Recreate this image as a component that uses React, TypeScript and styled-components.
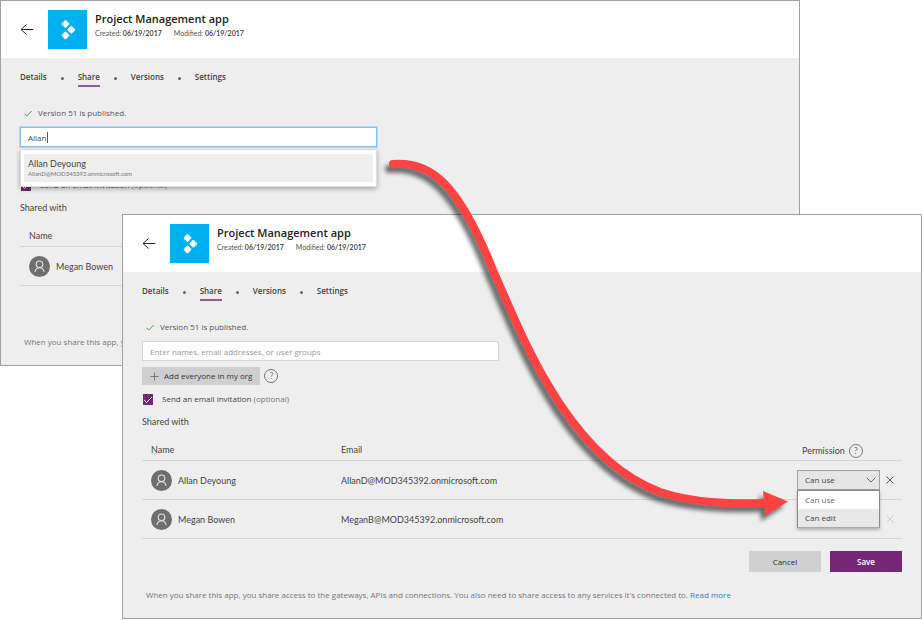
import React from "react";
import styled, { createGlobalStyle, css } from "styled-components";

const compactFont = `Lato, "Open Sans", sans-serif`;

const GlobalStyle = createGlobalStyle`
  *, *::before, *::after { box-sizing: border-box; }
  body {
    margin: 0;
    background: #fff;
    color: #444;
    font-family: "Open Sans", "Noto Sans", sans-serif;
    font-size: 8px;
    line-height: 12px;
  }
  button, input, select { font: inherit; color: inherit; margin: 0; }
  button { padding: 0; border: 0; background: none; }
`;

/* Both windows share one grid cell, so the second one overlaps the first. */
const Desktop = styled.main`
  position: relative;
  display: grid;
  grid-template-areas: "stack";
  align-items: start;
`;

const Window = styled.section<{ $front?: boolean }>`
  grid-area: stack;
  min-width: 0;
  border: 1px solid #a0a0a0;
  background: #eee;
  margin: ${(p) => (p.$front ? "214px 0 0 122px" : "0 122px 0 0")};
`;

const Header = styled.header`
  display: flex;
  align-items: center;
  height: 57px;
  padding: 0 19px;
  background: #fff;
`;

const BackButton = styled.button`
  display: flex;
  width: 28px;
  color: #222;
`;

const TitleBlock = styled.div`
  margin-left: 8px;
  padding-bottom: 10px;
`;

const Title = styled.h1`
  margin: 0;
  font-size: 11px;
  line-height: 16px;
  font-weight: 600;
  color: #222;
`;

const Meta = styled.p`
  display: flex;
  gap: 12px;
  margin: 0;
  font-family: ${compactFont};
  font-size: 7px;
  line-height: 12px;
  color: #555;
  b { font-weight: 600; color: #333; }
`;

const Content = styled.div`
  padding: 13px 19px 17px;
`;

const Tabs = styled.nav`
  display: flex;
  align-items: center;
  gap: 14px;
`;

const Tab = styled.a<{ $active?: boolean }>`
  padding-bottom: 2px;
  border-bottom: 2px solid ${(p) => (p.$active ? "#915a95" : "transparent")};
  font-weight: 600;
  color: #444;
  text-decoration: none;
`;

const Dot = styled.span`
  width: 3px;
  height: 3px;
  margin-bottom: 2px;
  border-radius: 50%;
  background: #666;
`;

const Status = styled.p`
  display: flex;
  align-items: center;
  gap: 6px;
  margin: 20px 0 8px;
  padding-left: 4px;
  color: #555;
`;

const PeopleField = styled.div`
  position: relative;
  width: 47%;
`;

const PeopleInput = styled.input<{ $focused?: boolean }>`
  display: block;
  width: 100%;
  height: 20px;
  padding: 0 7px;
  border: 1px solid #d6d6d6;
  border-radius: 0;
  background: #fff;
  outline: none;
  caret-color: transparent;
  &::placeholder { color: #999; opacity: 1; }
  ${(p) => p.$focused && css`
    border-color: #8cc1ea;
    box-shadow: 0 0 0 1px #b4d7f2;
  `}
`;

const Caret = styled.span`
  position: absolute;
  top: 5px;
  left: 27px;
  width: 1px;
  height: 11px;
  background: #555;
`;

const Suggestions = styled.ul`
  position: absolute;
  top: 100%;
  left: 0;
  right: 0;
  z-index: 1;
  margin: 2px 0 0;
  padding: 4px 3px;
  list-style: none;
  border: 1px solid #ddd;
  border-radius: 1px;
  background: #fff;
  box-shadow: 0 2px 5px rgba(0, 0, 0, 0.3);
`;

const Suggestion = styled.li`
  padding: 4px;
  background: #eee;
  font-family: ${compactFont};
  font-size: 9px;
  line-height: 12px;
  small {
    display: block;
    font-size: 6px;
    line-height: 8px;
    color: #777;
  }
`;

const OrgRow = styled.div<{ $covered?: boolean }>`
  display: flex;
  align-items: center;
  gap: 4px;
  margin-top: 6px;
  visibility: ${(p) => (p.$covered ? "hidden" : "visible")};
`;

const AddButton = styled.button`
  display: flex;
  align-items: center;
  gap: 5px;
  height: 18px;
  padding: 0 8px;
  background: #cfcfcf;
  color: #333;
`;

const HelpButton = styled.button`
  display: flex;
  align-items: center;
  justify-content: center;
  flex: none;
  width: 14px;
  height: 14px;
  border: 1px solid #777;
  border-radius: 50%;
  font-size: 9px;
  line-height: 12px;
  color: #777;
`;

const InviteLabel = styled.label`
  display: flex;
  align-items: center;
  gap: 9px;
  margin-top: 8px;
  padding-left: 1px;
  span span { color: #777; }
`;

const CheckWrap = styled.span`
  display: grid;
  svg, input { grid-area: 1 / 1; }
  svg { pointer-events: none; }
`;

const Checkbox = styled.input`
  appearance: none;
  width: 10px;
  height: 11px;
  background: #742774;
`;

const Heading = styled.h2`
  margin: 11px 0 0;
  font-family: ${compactFont};
  font-size: 9px;
  line-height: 12px;
  font-weight: 400;
`;

const Table = styled.table`
  width: 100%;
  margin-top: 16px;
  table-layout: fixed;
  border-collapse: separate;
  border-spacing: 0;
  font-family: ${compactFont};
  font-size: 9px;
  th, td {
    padding: 0;
    border-bottom: 1px solid #d4d4d4;
    text-align: left;
    font-weight: 400;
  }
  th { height: 17px; vertical-align: top; }
  td { height: 39px; padding-top: 1px; }
`;

const NameTh = styled.th`
  width: 199px;
  && { padding-left: 9px; }
`;

const EmailTh = styled.th<{ $covered?: boolean }>`
  span { visibility: ${(p) => (p.$covered ? "hidden" : "visible")}; }
`;

const PermissionTh = styled.th`
  width: 105px;
  && { padding-left: 5px; }
`;

const Person = styled.div`
  display: flex;
  align-items: center;
  gap: 6px;
  padding-left: 9px;
`;

const Inline = styled.div`
  display: flex;
  align-items: center;
  gap: 4px;
`;

const PermissionTools = styled.div`
  display: flex;
  align-items: center;
  justify-content: flex-end;
  gap: 5px;
  padding: 0 7px 2px 0;
`;

const SelectBox = styled.div`
  position: relative;
  display: grid;
  width: 83px;
  align-items: center;
  font-family: "Open Sans", sans-serif;
  font-size: 8px;
  select, > svg { grid-area: 1 / 1; }
  > svg {
    justify-self: end;
    margin-right: 4px;
    pointer-events: none;
  }
`;

const Select = styled.select`
  appearance: none;
  width: 100%;
  height: 20px;
  padding: 0 7px;
  border: 1px solid #a0a0a0;
  border-radius: 0;
  background: #e6e6e6;
  outline: none;
`;

const Menu = styled.ul`
  position: absolute;
  top: 100%;
  left: 0;
  right: 0;
  z-index: 1;
  margin: 0;
  padding: 0;
  list-style: none;
  border: 1px solid #888;
  border-bottom-color: #aaa;
  box-shadow: 0 2px 3px rgba(0, 0, 0, 0.25);
`;

const MenuItem = styled.li<{ $selected?: boolean }>`
  padding: 3px 7px;
  background: ${(p) => (p.$selected ? "#fff" : "#e8e8e8")};
  color: ${(p) => (p.$selected ? "#666" : "#444")};
  line-height: 12px;
`;

const RemoveButton = styled.button`
  display: flex;
  color: #555;
  &:disabled { color: #d0d0d0; }
`;

const Actions = styled.div`
  display: flex;
  justify-content: flex-end;
  gap: 9px;
  margin-top: 12px;
`;

const ActionButton = styled.button<{ $primary?: boolean }>`
  width: 72px;
  height: 21px;
  background: ${(p) => (p.$primary ? "#742774" : "#d0d0d0")};
  color: ${(p) => (p.$primary ? "#fff" : "#333")};
  font-weight: ${(p) => (p.$primary ? 600 : 400)};
`;

const Note = styled.p`
  margin: 17px 0 0;
  padding-left: 4px;
  color: #777;
  a { color: #3a7ab8; text-decoration: none; }
`;

const Callout = styled.svg`
  position: absolute;
  top: 0;
  left: 0;
  z-index: 2;
  overflow: visible;
  pointer-events: none;
  filter: drop-shadow(-4px 5px 2px rgba(0, 0, 0, 0.55));
`;

const BackIcon = () => (
  <svg width="14" height="12" viewBox="0 0 14 12" fill="none" stroke="currentColor" strokeWidth="1">
    <path d="M13.3 5.500H1M6.500 .5L1 5.500l5.500 5" />
  </svg>
);

const AppLogo = () => (
  <svg width="39" height="39" viewBox="0 0 39 39" role="img" aria-label="App icon">
    <path fill="#00b0f0" d="M0 0h39v39H0z" />
    <g fill="#fff">
      <rect x="14.5" y="11" width="6" height="6" rx="1" transform="rotate(45 17.5 14)" />
      <rect x="20.3" y="16.7" width="6" height="6" rx="1" transform="rotate(45 23.3 19.7)" />
      <rect x="14.5" y="22.4" width="6" height="6" rx="1" transform="rotate(45 17.5 25.4)" />
    </g>
  </svg>
);

const CheckIcon = () => (
  <svg width="8" height="8" viewBox="0 0 8 8" fill="none" stroke="#4d9a4d">
    <path d="M.5 4.8L2.7 7l5-5" />
  </svg>
);

const TickIcon = () => (
  <svg width="10" height="11" viewBox="0 0 10 11" fill="none" stroke="#fff">
    <path d="M1.2 6l2.4 2.4L8.8 3.2" />
  </svg>
);

const PlusIcon = () => (
  <svg width="9" height="9" viewBox="0 0 9 9" stroke="#777">
    <path d="M4.5 .5v8M.5 4.5h8" />
  </svg>
);

const Avatar = () => (
  <svg width="21" height="21" viewBox="0 0 21 21" fill="none" stroke="#e4e4e4" strokeWidth="1.1">
    <circle cx="10.5" cy="10.5" r="10.5" fill="#6e6e6e" stroke="none" />
    <circle cx="10.5" cy="8.3" r="3.3" />
    <path d="M5.9 16c.4-2.6 2-4.3 4.6-4.3s4.2 1.7 4.6 4.3" />
  </svg>
);

const ChevronIcon = () => (
  <svg width="10" height="6" viewBox="0 0 10 6" fill="none" stroke="#666">
    <path d="M.7 .7L5 5 9.3 .7" />
  </svg>
);

const CrossIcon = () => (
  <svg width="10" height="10" viewBox="0 0 10 10" stroke="currentColor">
    <path d="M1.5 1.5l7 7M8.5 1.5l-7 7" />
  </svg>
);

type Member = { name: string; email: string; editing?: boolean };

const allan: Member = { name: "Allan Deyoung", email: "AllanD@MOD345392.onmicrosoft.com", editing: true };
const megan: Member = { name: "Megan Bowen", email: "MeganB@MOD345392.onmicrosoft.com" };
const tabs = ["Details", "Share", "Versions", "Settings"];

function MemberRow({ name, email, editing }: Member) {
  return (
    <tr>
      <td><Person><Avatar />{name}</Person></td>
      <td>{email}</td>
      <td>
        <PermissionTools>
          {editing && (
            <SelectBox>
              <Select aria-label={`Permission for ${name}`} defaultValue="use">
                <option value="use">Can use</option>
                <option value="edit">Can edit</option>
              </Select>
              <ChevronIcon />
              <Menu role="listbox" aria-label="Permission options">
                <MenuItem role="option" aria-selected="true" $selected>Can use</MenuItem>
                <MenuItem role="option" aria-selected="false">Can edit</MenuItem>
              </Menu>
            </SelectBox>
          )}
          <RemoveButton type="button" aria-label={`Remove ${name}`} disabled={!editing}>
            <CrossIcon />
          </RemoveButton>
        </PermissionTools>
      </td>
    </tr>
  );
}

function ShareWindow({ front, members }: { front?: boolean; members: Member[] }) {
  return (
    <Window $front={front}>
      <Header>
        <BackButton type="button" aria-label="Back"><BackIcon /></BackButton>
        <AppLogo />
        <TitleBlock>
          <Title>Project Management app</Title>
          <Meta>
            <span>Created: <b>06/19/2017</b></span>
            <span>Modified: <b>06/19/2017</b></span>
          </Meta>
        </TitleBlock>
      </Header>
      <Content>
        <Tabs>
          {tabs.map((tab, i) => (
            <React.Fragment key={tab}>
              {i > 0 && <Dot />}
              <Tab href="#" $active={tab === "Share"}>{tab}</Tab>
            </React.Fragment>
          ))}
        </Tabs>
        <Status><CheckIcon />Version 51 is published.</Status>
        <PeopleField>
          <PeopleInput
            type="text"
            aria-label="People to share with"
            placeholder="Enter names, email addresses, or user groups"
            defaultValue={front ? "" : "Allan"}
            $focused={!front}
          />
          {!front && (
            <>
              <Caret />
              <Suggestions role="listbox" aria-label="Suggestions">
                <Suggestion role="option" aria-selected="true">
                  Allan Deyoung
                  <small>AllanD@MOD345392.onmicrosoft.com</small>
                </Suggestion>
              </Suggestions>
            </>
          )}
        </PeopleField>
        <OrgRow $covered={!front}>
          <AddButton type="button"><PlusIcon />Add everyone in my org</AddButton>
          <HelpButton type="button" aria-label="About sharing with everyone">?</HelpButton>
        </OrgRow>
        <InviteLabel>
          <CheckWrap><Checkbox type="checkbox" defaultChecked /><TickIcon /></CheckWrap>
          <span>Send an email invitation <span>(optional)</span></span>
        </InviteLabel>
        <Heading>Shared with</Heading>
        <Table>
          <thead>
            <tr>
              <NameTh>Name</NameTh>
              <EmailTh $covered={!front}><span>Email</span></EmailTh>
              <PermissionTh>
                <Inline>
                  Permission
                  <HelpButton type="button" aria-label="About permissions">?</HelpButton>
                </Inline>
              </PermissionTh>
            </tr>
          </thead>
          <tbody>
            {members.map((m) => <MemberRow key={m.name} {...m} />)}
          </tbody>
        </Table>
        <Actions>
          <ActionButton type="button">Cancel</ActionButton>
          <ActionButton type="button" $primary>Save</ActionButton>
        </Actions>
        <Note>
          When you share this app, you share access to the gateways, APIs and connections. You also
          need to share access to any services it's connected to. <a href="#">Read more</a>
        </Note>
      </Content>
    </Window>
  );
}

export default function App() {
  return (
    <>
      <GlobalStyle />
      <Desktop>
        <ShareWindow members={[megan]} />
        <ShareWindow front members={[allan, megan]} />
        <Callout width="800" height="530" viewBox="0 0 800 530" aria-hidden="true">
          <path
            d="M393 164C430 161 458 182 493 270C515 320 531 360 560 404C588 446 620 477 660 492C693 503 730 504 766 503"
            fill="none"
            stroke="#ff4343"
            strokeWidth="8"
            strokeLinecap="round"
          />
          <path d="M763 491l25 10.5L765 516z" fill="#ff4343" />
        </Callout>
      </Desktop>
    </>
  );
}
